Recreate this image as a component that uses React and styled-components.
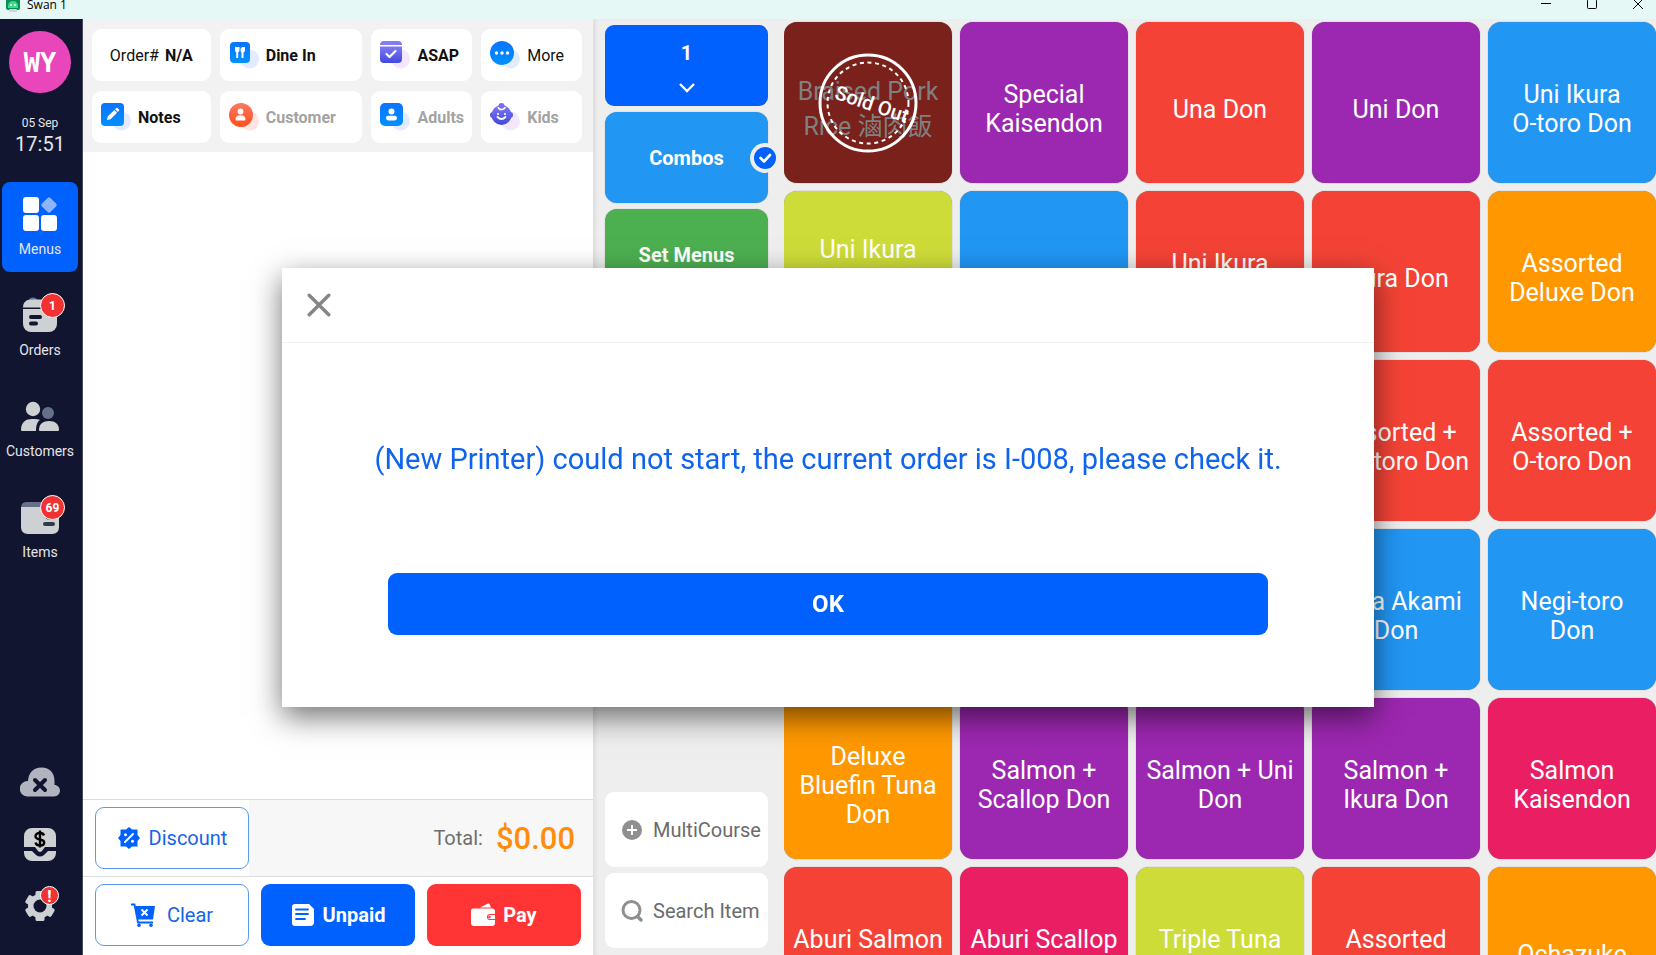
import React, { useState } from 'react';
import styled, { createGlobalStyle } from 'styled-components';

const colors = {
  red: '#f44336',
  purple: '#9c27b0',
  blue: '#2196f3',
  orange: '#ff9800',
  lime: '#cddc39',
  pink: '#e91e63',
  green: '#4caf50',
  primary: '#0061ff',
  navy: '#12152f',
  light: '#cdd1d4',
};

const items = [
  { name: 'Braised Pork Rice 滷肉飯', color: '#7a211b', soldOut: true },
  { name: 'Special Kaisendon', color: colors.purple },
  { name: 'Una Don', color: colors.red },
  { name: 'Uni Don', color: colors.purple },
  { name: 'Uni Ikura O-toro Don', color: colors.blue },
  { name: 'Uni Ikura Negi-toro Don', color: colors.lime },
  { name: 'Tuna Don', color: colors.blue },
  { name: 'Uni Ikura Scallop', color: colors.red },
  { name: 'Ikura Don', color: colors.red },
  { name: 'Assorted Deluxe Don', color: colors.orange },
  { name: '', color: colors.blue },
  { name: '', color: colors.pink },
  { name: '', color: colors.red },
  { name: 'Assorted + Chu-toro Don', color: colors.red },
  { name: 'Assorted + O-toro Don', color: colors.red },
  { name: '', color: colors.blue },
  { name: '', color: colors.blue },
  { name: '', color: colors.blue },
  { name: 'Tuna Akami Don', color: colors.blue },
  { name: 'Negi-toro Don', color: colors.blue },
  { name: 'Deluxe Bluefin Tuna Don', color: colors.orange },
  { name: 'Salmon + Scallop Don', color: colors.purple },
  { name: 'Salmon + Uni Don', color: colors.purple },
  { name: 'Salmon + Ikura Don', color: colors.purple },
  { name: 'Salmon Kaisendon', color: colors.pink },
  { name: 'Aburi Salmon Don', color: colors.red },
  { name: 'Aburi Scallop Don', color: colors.pink },
  { name: 'Triple Tuna Don', color: colors.lime },
  { name: 'Assorted Kaisendon', color: colors.red },
  { name: 'Ochazuke', color: colors.orange },
];

// keep "O-toro" and "Negi-toro" in one piece when a name wraps
const noBreak = (name) =>
  name.split(' ').map((word, index) => (
    <React.Fragment key={index}>
      {index > 0 && ' '}
      <Word>{word}</Word>
    </React.Fragment>
  ));

/* ---------- icons ---------- */

const AppIcon = () => (
  <svg width="14" height="16" viewBox="0 0 14 16" aria-hidden="true">
    <rect x="0" y="0" width="14" height="14" rx="2" fill="#0b8f5a" />
    <path d="M2 10a5 5 0 0 1 10 0v2H2z" fill="#3ddc84" />
    <circle cx="5" cy="9" r="1" fill="#fff" />
    <circle cx="9" cy="9" r="1" fill="#fff" />
    <rect x="3" y="13" width="8" height="3" rx="1" fill="#d4d4d4" />
  </svg>
);

const MenusIcon = () => (
  <svg width="36" height="36" viewBox="0 0 36 36" fill="#fff" aria-hidden="true">
    <rect x="1" y="1" width="16" height="16" rx="3" />
    <rect x="1" y="19" width="16" height="16" rx="3" />
    <rect x="19" y="19" width="16" height="16" rx="3" />
    <rect x="21" y="3" width="12" height="12" rx="2" fill="#8db4ff" transform="rotate(45 27 9)" />
  </svg>
);

const OrdersIcon = () => (
  <svg width="36" height="36" viewBox="0 0 36 36" aria-hidden="true">
    <path d="M7 3.500a4 3 0 0 1 8 0z" fill="#667089" />
    <path d="M1 10.500c0-5 3-8 8-8h18c5 0 8 3 8 8z" fill={colors.light} />
    <path d="M1 12h34v15a8 8 0 0 1-8 8H9a8 8 0 0 1-8-8z" fill={colors.light} />
    <path d="M9 20h9M9 26.500h5" stroke={colors.navy} strokeWidth="4" strokeLinecap="round" />
  </svg>
);

const CustomersIcon = () => (
  <svg width="40" height="36" viewBox="0 0 40 36" aria-hidden="true">
    <circle cx="13" cy="11" r="7.2" fill={colors.light} />
    <circle cx="28" cy="15" r="6" fill="#667089" />
    <path d="M1 32C1 24 6 21 12 21c4 0 7 0 8 1-3 2-4 6-4 11H2q-1 0-1-1z" fill={colors.light} />
    <path d="M19 32c0-6 4-9 10-9s10 3 10 9q0 1-1 1H20q-1 0-1-1z" fill={colors.light} />
  </svg>
);

const ItemsIcon = () => (
  <svg width="40" height="36" viewBox="0 0 40 36" aria-hidden="true">
    <path d="M1 9c0-4 2-6 6-6h26c4 0 6 2 6 6z" fill="#667089" />
    <path d="M1 8h38v20q0 7-7 7H8q-7 0-7-7z" fill={colors.light} />
    <path d="M28 18.500h5M25 25h8" stroke="#2c3d49" strokeWidth="4" strokeLinecap="round" />
  </svg>
);

const CloudIcon = () => (
  <svg width="40" height="32" viewBox="0 0 40 32" aria-hidden="true">
    <path d="M7 30.500a7.500 7.500 0 0 1 1-15.500C8.500 7 13 1.500 21.500 1.500S34.500 7 34.500 15v4c3 0 5.500 2.500 5.500 5.500s-2.500 6-6 6z" fill="#b1b3be" />
    <path d="m15 14 10 10m0-10L15 24" stroke={colors.navy} strokeWidth="4" strokeLinecap="round" />
  </svg>
);

const CashIcon = () => (
  <svg width="34" height="34" viewBox="0 0 34 34" aria-hidden="true">
    <path d="M1 20V9a8 8 0 0 1 8-8h16a8 8 0 0 1 8 8v11H22l-3 4q-2 2-4 0l-3-4z" fill={colors.light} />
    <path d="M1 24h8l4 4q4 3 8 0l4-4h8v2a8 8 0 0 1-8 8H9a8 8 0 0 1-8-8z" fill={colors.light} />
    <path d="M21 8.500C20.500 7 19 6 17 6c-3 0-4.500 1.500-4.500 3.200 0 4.600 8.700 2 8.700 6.300 0 2-2 3-4.200 3s-4-1-4.500-3M17 3.500v17" fill="none" stroke="#000" strokeWidth="2.400" />
  </svg>
);

const GearIcon = () => (
  <svg width="32" height="32" viewBox="0 0 32 32" fill={colors.light} aria-hidden="true">
    <circle cx="16" cy="16" r="12" />
    <rect x="11.500" y="1" width="9" height="30" rx="1.500" />
    <rect x="11.500" y="1" width="9" height="30" rx="1.500" transform="rotate(60 16 16)" />
    <rect x="11.500" y="1" width="9" height="30" rx="1.500" transform="rotate(120 16 16)" />
    <circle cx="16" cy="16" r="6.500" fill={colors.navy} />
  </svg>
);

const Gradients = () => (
  <defs>
    <linearGradient id="gBlue" x2="0" y2="1">
      <stop stopColor="#0a74ff" />
      <stop offset="1" stopColor="#0090ff" />
    </linearGradient>
    <linearGradient id="gOrange" x2="0" y2="1">
      <stop stopColor="#fb7a63" />
      <stop offset="1" stopColor="#ff4d1c" />
    </linearGradient>
    <linearGradient id="gViolet" x2="0" y2="1">
      <stop stopColor="#8279f2" />
      <stop offset="1" stopColor="#3f48dd" />
    </linearGradient>
  </defs>
);

const halos = { gBlue: '#e2ebff', gOrange: '#ffe4e1', gViolet: '#f4e7fd' };

const ToolIcon = ({ tone, children }) => (
  <svg width="30" height="28" viewBox="0 0 30 28" aria-hidden="true">
    <Gradients />
    <circle cx="20.500" cy="18" r="9.500" fill={halos[tone]} />
    {children}
  </svg>
);

const DineIcon = () => (
  <ToolIcon tone="gBlue">
    <rect x="1" y="1" width="20" height="21" rx="4" fill="url(#gBlue)" />
    <path d="M6 6h4.500v3q0 2-1.300 2.300V17h-2v-5.700Q6 11 6 9zM11.500 8.500Q11.500 6 13.500 6H16v3q0 2-1.500 2.500V17h-2v-5.500q-1-.500-1-3z" fill="#fff" />
  </ToolIcon>
);

const AsapIcon = () => (
  <ToolIcon tone="gViolet">
    <path d="M0 4q0-4 4-4h14q4 0 4 4z" fill="#857cf3" />
    <path d="M0 5.500h22V18q0 4-4 4H4q-4 0-4-4z" fill="url(#gViolet)" />
    <path d="m6.500 13 3 3 6-6" fill="none" stroke="#fff" strokeWidth="2.200" strokeLinecap="round" strokeLinejoin="round" />
  </ToolIcon>
);

const MoreIcon = () => (
  <ToolIcon tone="gBlue">
    <circle cx="12" cy="12" r="12" fill="url(#gBlue)" />
    <g fill="#fff">
      <circle cx="6.500" cy="12" r="1.700" />
      <circle cx="12" cy="12" r="1.700" />
      <circle cx="17.500" cy="12" r="1.700" />
    </g>
  </ToolIcon>
);

const NotesIcon = () => (
  <ToolIcon tone="gBlue">
    <rect width="23" height="23" rx="4" fill="url(#gBlue)" />
    <path d="m6 17 .700-3.500 6.600-6.600 2.800 2.800-6.600 6.600zM14 6.200l1-1q1-.700 1.800 0l1 1q.800 1 0 1.800l-1 1z" fill="#fff" />
  </ToolIcon>
);

const CustomerIcon = () => (
  <ToolIcon tone="gOrange">
    <circle cx="12" cy="12" r="12" fill="url(#gOrange)" />
    <circle cx="11.500" cy="8.500" r="2.900" fill="#fff" />
    <path d="M6.500 16.500q0-4.300 5-4.300t5 4.300q0 1-1 1h-8q-1 0-1-1z" fill="#fff" />
  </ToolIcon>
);

const AdultsIcon = () => (
  <ToolIcon tone="gBlue">
    <rect width="23" height="23" rx="5" fill="url(#gBlue)" />
    <circle cx="11.500" cy="8.500" r="3" fill="#fff" />
    <rect x="6" y="12.800" width="11" height="4.600" rx="2.300" fill="#fff" />
  </ToolIcon>
);

const KidsIcon = () => (
  <ToolIcon tone="gViolet">
    <circle cx="3" cy="12" r="3" fill="#5a5be4" />
    <circle cx="20" cy="12" r="3" fill="#5a5be4" />
    <circle cx="11.500" cy="12" r="10" fill="url(#gViolet)" />
    <circle cx="11.500" cy="3" r="3" fill="#776ff0" />
    <path d="M8 4q1 3 4 2.500t3-2.500" fill="none" stroke="#fff" strokeWidth="1.500" />
    <circle cx="8" cy="11" r="1.100" fill="#fff" />
    <circle cx="15" cy="11" r="1.100" fill="#fff" />
    <path d="M7.500 14q4 4 8 0" fill="none" stroke="#fff" strokeWidth="1.800" strokeLinecap="round" />
  </ToolIcon>
);

const DiscountIcon = () => (
  <svg width="24" height="24" viewBox="0 0 24 24" aria-hidden="true">
    <path d="m12 1 3 2.500h5.500V9l2.500 3-2.500 3v5.500H15L12 23l-3-2.500H3.500V15L1 12l2.500-3V3.500H9z" fill={colors.primary} />
    <path d="m8 16 8-8" stroke="#fff" strokeWidth="2" strokeLinecap="round" />
    <circle cx="8.500" cy="8.800" r="1.500" fill="#fff" />
    <circle cx="15.500" cy="15.200" r="1.500" fill="#fff" />
  </svg>
);

const ClearIcon = () => (
  <svg width="24" height="24" viewBox="0 0 24 24" aria-hidden="true">
    <path d="M4 3h20l-2 13.500H7L4 3z" fill={colors.primary} />
    <path d="M0 1.500h3.500L7 19.500h15" fill="none" stroke={colors.primary} strokeWidth="1.800" />
    <circle cx="8" cy="22.200" r="1.800" fill={colors.primary} />
    <circle cx="20" cy="22.200" r="1.800" fill={colors.primary} />
    <path d="m10.500 6.500 6 6m0-6-6 6" stroke="#fff" strokeWidth="2" />
  </svg>
);

const UnpaidIcon = () => (
  <svg width="24" height="24" viewBox="0 0 24 24" aria-hidden="true">
    <path d="M4 1h14l5 5v13q0 4-4 4H4q-3 0-3-3V4q0-3 3-3z" fill="#fff" />
    <path d="M5 6.500h12M5 11h12M5 16h9" stroke={colors.primary} strokeWidth="1.800" strokeLinecap="round" />
  </svg>
);

const PayIcon = () => (
  <svg width="24" height="24" viewBox="0 0 24 24" aria-hidden="true">
    <path d="M9 4.500 17 .600q1-.400 1.500.600L20 4.500z" fill="#fff" />
    <path d="M2 5.500h19q3 0 3 3V11h-5q-3 0-3 3t3 3h5v3q0 3-3 3H3q-3 0-3-3V7.500q0-2 2-2z" fill="#fff" />
    <path d="M19 12h5v4h-5q-2 0-2-2t2-2z" fill="#fff" />
    <circle cx="18.500" cy="14" r="1.200" fill="#ff3434" />
  </svg>
);

const PlusIcon = () => (
  <svg width="22" height="22" viewBox="0 0 22 22" aria-hidden="true">
    <circle cx="11" cy="11" r="10" fill="#8f8f8f" />
    <path d="M11 6v10M6 11h10" stroke="#fff" strokeWidth="2" />
  </svg>
);

const SearchIcon = () => (
  <svg width="22" height="22" viewBox="0 0 22 22" fill="none" stroke="#8f8f8f" aria-hidden="true">
    <circle cx="10.500" cy="10" r="8.500" strokeWidth="3" />
    <path d="m16.500 16.500 3.500 3.500" strokeWidth="3.400" strokeLinecap="round" />
  </svg>
);

const ChevronIcon = () => (
  <svg width="16" height="10" viewBox="0 0 16 10" fill="none" stroke="#fff" strokeWidth="2.400" aria-hidden="true">
    <path d="m1 1 7 7 7-7" />
  </svg>
);

const CheckIcon = () => (
  <svg width="30" height="30" viewBox="0 0 30 30" aria-hidden="true">
    <circle cx="15" cy="15" r="15" fill="#eee" />
    <circle cx="15" cy="15" r="11" fill={colors.primary} />
    <path d="m10.500 15 3.500 3.500 6-6.500" fill="none" stroke="#fff" strokeWidth="2.600" strokeLinecap="round" strokeLinejoin="round" />
  </svg>
);

const CloseIcon = () => (
  <svg width="24" height="24" viewBox="0 0 24 24" stroke="#858585" strokeWidth="3.400" strokeLinecap="round" aria-hidden="true">
    <path d="m2.200 2.200 19.600 19.600m0-19.600L2.200 21.800" />
  </svg>
);

const SoldOutStamp = () => (
  <svg width="100" height="100" viewBox="0 0 100 100" aria-hidden="true">
    <circle cx="50" cy="50" r="48" fill="none" stroke="#fff" strokeWidth="3" />
    <circle cx="50" cy="50" r="40.500" fill="none" stroke="#fff" strokeWidth="2" strokeDasharray="4 3.600" />
    <text x="54" y="58" fill="#fff" fontSize="20" fontWeight="500" textAnchor="middle" transform="rotate(19 54 51)">
      Sold Out
    </text>
  </svg>
);

/* ---------- page ---------- */

const App = () => {
  const [open, setOpen] = useState(true);

  return (
    <Shell>
      <GlobalStyle />
      <TitleBar>
        <TitleContent>
          <AppIcon />
          <TitleText>Swan 1</TitleText>
          <WindowButton aria-label="Minimize">
            <svg width="10" height="10" viewBox="0 0 10 10" stroke="#000"><path d="M0 4.500h10" /></svg>
          </WindowButton>
          <WindowButton aria-label="Maximize">
            <svg width="10" height="10" viewBox="0 0 10 10" fill="none" stroke="#000"><rect x=".5" y=".5" width="9" height="9" rx="1" /></svg>
          </WindowButton>
          <WindowButton aria-label="Close window">
            <svg width="10" height="10" viewBox="0 0 10 10" stroke="#000"><path d="m0 0 10 10M10 0 0 10" /></svg>
          </WindowButton>
        </TitleContent>
      </TitleBar>

      <Workspace>
        <Sidebar>
          <Avatar>WY</Avatar>
          <DateText>05 Sep</DateText>
          <TimeText>17:51</TimeText>
          <NavList>
            <NavButton $active>
              <NavIcon><MenusIcon /></NavIcon>
              Menus
            </NavButton>
            <NavButton>
              <NavIcon><OrdersIcon /><Badge>1</Badge></NavIcon>
              Orders
            </NavButton>
            <NavButton>
              <NavIcon><CustomersIcon /></NavIcon>
              Customers
            </NavButton>
            <NavButton>
              <NavIcon><ItemsIcon /><Badge>69</Badge></NavIcon>
              Items
            </NavButton>
          </NavList>
          <SideTools>
            <SideTool aria-label="Cloud sync"><CloudIcon /></SideTool>
            <SideTool aria-label="Cash drawer"><CashIcon /></SideTool>
            <SideTool aria-label="Settings"><GearIcon /><AlertBadge>!</AlertBadge></SideTool>
          </SideTools>
        </Sidebar>

        <OrderPanel>
          <OrderTools>
            <ToolButton $center>Order#&nbsp;<strong>N/A</strong></ToolButton>
            <ToolButton $bold><DineIcon />Dine In</ToolButton>
            <ToolButton $bold><AsapIcon />ASAP</ToolButton>
            <ToolButton><MoreIcon />More</ToolButton>
            <ToolButton $bold><NotesIcon />Notes</ToolButton>
            <ToolButton $bold $muted><CustomerIcon />Customer</ToolButton>
            <ToolButton $bold $muted><AdultsIcon />Adults</ToolButton>
            <ToolButton $bold $muted><KidsIcon />Kids</ToolButton>
          </OrderTools>
          <OrderLines />
          <TotalRow>
            <DiscountCell>
              <ActionButton $outline $gap={8}><DiscountIcon />Discount</ActionButton>
            </DiscountCell>
            <TotalLabel>Total:</TotalLabel>
            <TotalValue>$0.00</TotalValue>
          </TotalRow>
          <ActionRow>
            <ActionButton $outline $gap={12}><ClearIcon />Clear</ActionButton>
            <ActionButton $color={colors.primary} $gap={8}><UnpaidIcon />Unpaid</ActionButton>
            <ActionButton $color="#ff3434" $gap={8}><PayIcon />Pay</ActionButton>
          </ActionRow>
        </OrderPanel>

        <CategoryPanel>
          <QuantityButton>1<ChevronIcon /></QuantityButton>
          <CategoryButton $color={colors.blue}>
            Combos
            <SelectedMark><CheckIcon /></SelectedMark>
          </CategoryButton>
          <CategoryButton $color={colors.green}>Set Menus</CategoryButton>
          <CategoryFooter>
            <UtilityButton><PlusIcon />MultiCourse</UtilityButton>
            <UtilityButton><SearchIcon />Search Item</UtilityButton>
          </CategoryFooter>
        </CategoryPanel>

        <ItemGrid>
          {items.map((item, index) => (
            <ItemTile key={index} $color={item.color} $soldOut={item.soldOut}>
              <span>{noBreak(item.name)}</span>
              {item.soldOut && <Stamp><SoldOutStamp /></Stamp>}
            </ItemTile>
          ))}
        </ItemGrid>
      </Workspace>

      {open && (
        <ModalLayer>
          <Modal role="dialog" aria-label="Printer message">
            <ModalHeader>
              <CloseButton aria-label="Close" onClick={() => setOpen(false)}><CloseIcon /></CloseButton>
            </ModalHeader>
            <ModalBody>
              <Message>(New Printer) could not start, the current order is I-008, please check it.</Message>
              <OkButton onClick={() => setOpen(false)}>OK</OkButton>
            </ModalBody>
          </Modal>
        </ModalLayer>
      )}
    </Shell>
  );
};

const GlobalStyle = createGlobalStyle`
  * {
    box-sizing: border-box;
  }

  body {
    margin: 0;
    font-family: Roboto, "Noto Sans CJK TC", sans-serif;
  }

  button {
    margin: 0;
    padding: 0;
    border: none;
    background: none;
    font: inherit;
    color: inherit;
    cursor: pointer;
  }

  svg {
    display: block;
    flex-shrink: 0;
  }
`;

const Shell = styled.div`
  height: 100vh;
  display: flex;
  flex-direction: column;
  overflow: hidden;
`;

const TitleBar = styled.header`
  height: 19px;
  flex-shrink: 0;
  display: flex;
  align-items: flex-end;
  overflow: hidden;
  background: #e5f8f6;
`;

const TitleContent = styled.div`
  flex: 1;
  height: 30px;
  flex-shrink: 0;
  display: flex;
  align-items: center;
  padding-left: 6px;
  font-family: "Open Sans", "Noto Sans", sans-serif;
  font-size: 12px;
`;

const TitleText = styled.span`
  flex: 1;
  margin-left: 7px;
`;

const WindowButton = styled.button`
  width: 46px;
  height: 30px;
  display: grid;
  place-items: center;

  &:last-child {
    width: 36px;
    margin-left: 5px;
  }
`;

const Workspace = styled.main`
  flex: 1;
  min-height: 0;
  display: grid;
  grid-template-columns: 83px 510px 191px 1fr;
  grid-template-rows: minmax(0, 1fr);
  background: #eee;
`;

const Sidebar = styled.nav`
  display: flex;
  flex-direction: column;
  align-items: center;
  padding: 12px 4px 29px 2px;
  background: ${colors.navy};
  border-right: 1px solid #45485f;
  color: #e4e6ea;
`;

const Avatar = styled.div`
  width: 62px;
  height: 62px;
  display: grid;
  place-items: center;
  border-radius: 50%;
  background: #e946bc;
  color: #fff;
  font-family: "DejaVu Sans Mono", monospace;
  font-size: 27px;
  font-weight: 700;
`;

const DateText = styled.div`
  margin-top: 22px;
  font-size: 12px;
  line-height: 16px;
`;

const TimeText = styled.div`
  font-size: 20px;
  line-height: 26px;
`;

const NavList = styled.div`
  width: 100%;
  margin-top: 25px;
  display: flex;
  flex-direction: column;
  gap: 11px;
`;

const NavButton = styled.button`
  height: 90px;
  display: flex;
  flex-direction: column;
  align-items: center;
  gap: 9px;
  padding-top: 14px;
  border-radius: 8px;
  background: ${({ $active }) => ($active ? colors.primary : 'transparent')};
  font-size: 14px;
  line-height: 16px;
`;

const NavIcon = styled.span`
  position: relative;
  width: 36px;
  display: flex;
  justify-content: center;
`;

const Badge = styled.span`
  position: absolute;
  top: -4px;
  right: -7px;
  min-width: 25px;
  height: 25px;
  display: grid;
  place-items: center;
  border: 1px solid #fff;
  border-radius: 50%;
  background: #f03232;
  color: #fff;
  font-size: 12px;
  font-weight: 700;
`;

const AlertBadge = styled(Badge)`
  top: 0;
  right: 1px;
  min-width: 19px;
  height: 19px;
  font-size: 16px;
`;

const SideTools = styled.div`
  margin-top: auto;
  display: flex;
  flex-direction: column;
  gap: 22px;
`;

const SideTool = styled.button`
  position: relative;
  width: 40px;
  height: 40px;
  display: grid;
  place-items: center;
`;

const OrderPanel = styled.section`
  display: flex;
  flex-direction: column;
  background: #fff;
`;

const OrderTools = styled.div`
  display: grid;
  grid-template-columns: 119fr 143fr 101fr 101fr;
  column-gap: 9px;
  row-gap: 10px;
  padding: 10px 11px 9px 9px;
  background: #f2f2f2;
`;

const ToolButton = styled.button`
  height: 52px;
  display: flex;
  align-items: center;
  justify-content: ${({ $center }) => ($center ? 'center' : 'flex-start')};
  gap: ${({ $center }) => ($center ? '2px' : '7px')};
  padding-left: ${({ $center }) => ($center ? '0' : '9px')};
  border-radius: 9px;
  background: #fff;
  color: ${({ $muted }) => ($muted ? '#a3a3a3' : '#111')};
  font-size: 16px;
  font-weight: ${({ $bold }) => ($bold ? 700 : 400)};
  white-space: nowrap;
`;

const OrderLines = styled.div`
  flex: 1;
`;

const TotalRow = styled.div`
  display: flex;
  align-items: center;
  padding-right: 18px;
  border-top: 1px solid #dcdcdc;
  border-bottom: 1px solid #dcdcdc;
  background: #f7f7f7;
`;

const DiscountCell = styled.div`
  margin-right: auto;
  padding: 7px 0 7px 12px;
  background: #fff;
`;

const TotalLabel = styled.span`
  color: #6f6f6f;
  font-size: 20px;
`;

const TotalValue = styled.span`
  margin-left: 13px;
  color: #ff8c0a;
  font-size: 31px;
  font-weight: 500;
`;

const ActionRow = styled.div`
  display: flex;
  justify-content: space-between;
  padding: 7px 12px 9px;
`;

const ActionButton = styled.button`
  width: 154px;
  height: 62px;
  display: flex;
  align-items: center;
  justify-content: center;
  gap: ${({ $gap }) => $gap}px;
  border: ${({ $outline }) => ($outline ? '1px solid #5a9bef' : 'none')};
  border-radius: 9px;
  background: ${({ $color }) => $color || '#fff'};
  color: ${({ $outline }) => ($outline ? '#1565e8' : '#fff')};
  font-size: 20px;
  font-weight: ${({ $outline }) => ($outline ? 400 : 700)};
`;

const CategoryPanel = styled.section`
  display: flex;
  flex-direction: column;
  gap: 6px;
  padding: 6px 16px 7px 12px;
  box-shadow: inset 4px 0 3px -1px #e0e0e0;
`;

const QuantityButton = styled.button`
  height: 81px;
  display: flex;
  flex-direction: column;
  align-items: center;
  justify-content: center;
  gap: 18px;
  padding-top: 2px;
  border-radius: 9px;
  background: ${colors.primary};
  color: #fff;
  font-size: 20px;
  font-weight: 700;
`;

const CategoryButton = styled.button`
  position: relative;
  height: 91px;
  border-radius: 12px;
  background: ${({ $color }) => $color};
  box-shadow: 0 0 1px rgba(0, 0, 0, 0.4);
  color: #fff;
  font-size: 20px;
  font-weight: 700;
`;

const SelectedMark = styled.span`
  position: absolute;
  top: 50%;
  right: -12px;
  transform: translateY(-50%);
`;

const CategoryFooter = styled.div`
  margin-top: auto;
  display: grid;
  gap: 6px;
`;

const UtilityButton = styled.button`
  height: 75px;
  display: flex;
  align-items: center;
  gap: 10px;
  padding-left: 16px;
  border-radius: 9px;
  background: #fff;
  color: #6b6b6b;
  font-size: 20px;
  white-space: nowrap;
`;

const ItemGrid = styled.section`
  display: grid;
  grid-template-columns: repeat(5, minmax(0, 1fr));
  grid-auto-rows: 161px;
  align-content: start;
  gap: 8px;
  padding-top: 3px;
  overflow: hidden;
`;

const ItemTile = styled.button`
  position: relative;
  display: flex;
  align-items: center;
  justify-content: center;
  padding: 13px 8px 0;
  border-radius: 13px;
  background: ${({ $color }) => $color};
  box-shadow: 0 0 1px rgba(0, 0, 0, 0.5);
  color: ${({ $soldOut }) => ($soldOut ? '#808080' : '#fff')};
  font-size: 25px;
  line-height: ${({ $soldOut }) => ($soldOut ? '35px' : '29px')};
`;

const Word = styled.span`
  white-space: nowrap;
`;

const Stamp = styled.span`
  position: absolute;
  inset: 0;
  display: grid;
  place-items: center;
`;

const ModalLayer = styled.div`
  position: fixed;
  inset: 19px 0 0;
  display: grid;
  place-items: center;
`;

const Modal = styled.div`
  width: 66%;
  min-width: 480px;
  background: #fff;
  box-shadow: 0 10px 28px rgba(0, 0, 0, 0.55);
`;

const ModalHeader = styled.div`
  padding: 25px;
  border-bottom: 1px solid #f1f1f1;
`;

const CloseButton = styled.button`
  display: block;
`;

const ModalBody = styled.div`
  padding: 97px 64px 72px;
  display: flex;
  flex-direction: column;
  align-items: center;
`;

const Message = styled.p`
  margin: 0 0 95px;
  color: #1064ec;
  font-size: 29px;
  line-height: 38px;
  text-align: center;
`;

const OkButton = styled.button`
  width: calc(100% - 84px);
  height: 62px;
  border-radius: 9px;
  background: ${colors.primary};
  color: #fff;
  font-size: 24px;
  font-weight: 700;
`;

export default App;
